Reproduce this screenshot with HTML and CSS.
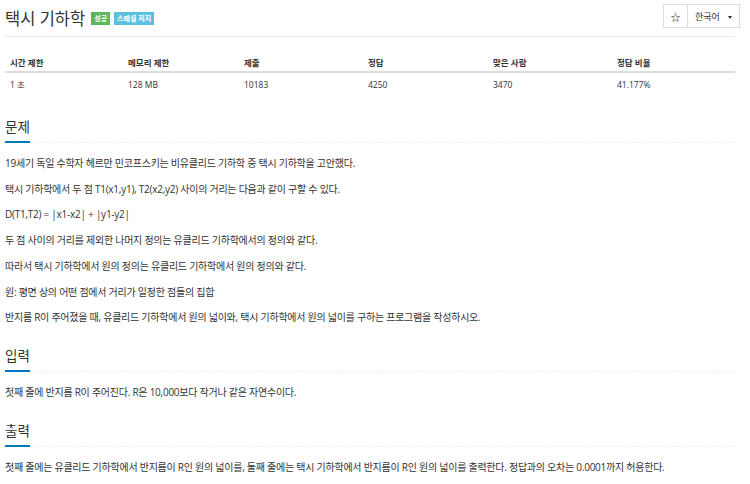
FILE: index.html
```html
<!DOCTYPE html>
<html>
<head>
  <title>택시 기하학</title>
  <link rel="stylesheet" href="styles.css">
</head>
<body>
  <div class="page">
    <div class="page-header">
      <h1 class="title">택시 기하학</h1>
      <span class="label label-success">성공</span>
      <span class="label label-info">스페셜 저지</span>
      <div class="btn-group">
        <button class="btn btn-star">☆</button>
        <button class="btn btn-lang">한국어 <span class="caret"></span></button>
      </div>
    </div>

    <table class="info-table">
      <thead>
        <tr>
          <th class="col1">시간 제한</th>
          <th class="col2">메모리 제한</th>
          <th class="col3">제출</th>
          <th class="col4">정답</th>
          <th class="col5">맞은 사람</th>
          <th class="col6">정답 비율</th>
        </tr>
      </thead>
      <tbody>
        <tr>
          <td>1 초</td>
          <td>128 MB</td>
          <td>10183</td>
          <td>4250</td>
          <td>3470</td>
          <td>41.177%</td>
        </tr>
      </tbody>
    </table>

    <section class="problem-section">
      <div class="headline"><h2><span>문제</span></h2></div>
      <p>19세기 독일 수학자 헤르만 민코프스키는 비유클리드 기하학 중 택시 기하학을 고안했다.</p>
      <p>택시 기하학에서 두 점 T1(x1,y1), T2(x2,y2) 사이의 거리는 다음과 같이 구할 수 있다.</p>
      <p>D(T1,T2) = |x1-x2| + |y1-y2|</p>
      <p>두 점 사이의 거리를 제외한 나머지 정의는 유클리드 기하학에서의 정의와 같다.</p>
      <p>따라서 택시 기하학에서 원의 정의는 유클리드 기하학에서 원의 정의와 같다.</p>
      <p>원: 평면 상의 어떤 점에서 거리가 일정한 점들의 집합</p>
      <p>반지름 R이 주어졌을 때, 유클리드 기하학에서 원의 넓이와, 택시 기하학에서 원의 넓이를 구하는 프로그램을 작성하시오.</p>
    </section>

    <section class="problem-section">
      <div class="headline"><h2><span>입력</span></h2></div>
      <p>첫째 줄에 반지름 R이 주어진다. R은 10,000보다 작거나 같은 자연수이다.</p>
    </section>

    <section class="problem-section">
      <div class="headline"><h2><span>출력</span></h2></div>
      <p>첫째 줄에는 유클리드 기하학에서 반지름이 R인 원의 넓이를, 둘째 줄에는 택시 기하학에서 반지름이 R인 원의 넓이를 출력한다. 정답과의 오차는 0.0001까지 허용한다.</p>
    </section>
  </div>
</body>
</html>
```

FILE: styles.css
```css
body {
  margin: 0;
  font-family: "Open Sans", "Noto Sans CJK KR", sans-serif;
  color: #333;
  background: #fff;
}

.page {
  padding: 0 15px 0 5px;
}

.page-header {
  display: flex;
  align-items: center;
  height: 36px;
  border-bottom: 1px solid #eee;
}

.title {
  margin: 0 6px 0 0;
  font-size: 16.5px;
  font-weight: normal;
  color: #333;
}

.label {
  display: inline-block;
  margin-right: 4px;
  padding: 0 3px;
  font-size: 7px;
  line-height: 13px;
  font-weight: bold;
  color: #fff;
}

.label-success {
  background-color: #5cb85c;
}

.label-info {
  background-color: #5bc0de;
}

.btn-group {
  display: flex;
  margin-left: auto;
  margin-right: -5px;
  align-self: flex-start;
  margin-top: 4px;
}

.btn {
  height: 24px;
  padding: 0;
  border: 1px solid #ddd;
  background: #fff;
  color: #333;
  font-family: inherit;
  font-size: 9px;
  white-space: nowrap;
}

.btn-star {
  width: 25px;
  font-size: 10px;
}

.btn-lang {
  margin-left: -1px;
  width: 53px;
}

.caret {
  display: inline-block;
  margin-left: 6px;
  vertical-align: middle;
  border-top: 3px solid #333;
  border-left: 2.5px solid transparent;
  border-right: 2.5px solid transparent;
}

.info-table {
  width: 730px;
  margin-top: 15px;
  border-collapse: collapse;
  font-size: 8.5px;
  text-align: left;
}

.info-table th {
  padding: 0 5px;
  height: 19px;
  font-weight: bold;
  border-bottom: 2px solid #ddd;
}

.info-table td {
  padding: 0 5px;
  height: 22px;
}

.col1 { width: 108px; }
.col2 { width: 106px; }
.col3 { width: 114px; }
.col4 { width: 115px; }
.col5 { width: 114px; }
.col6 { width: 113px; }

.headline {
  margin-top: 14px;
  border-bottom: 1px dashed #eee;
}

.headline h2 {
  margin: 0;
  font-size: 13.5px;
  font-weight: normal;
  line-height: 22px;
}

.headline h2 span {
  display: inline-block;
  padding-bottom: 3px;
  margin-bottom: -1px;
  border-bottom: 2px solid #0076c0;
}

.problem-section p {
  margin: 0;
  font-size: 10px;
  letter-spacing: -0.25px;
  line-height: 25.7px;
}

.problem-section .headline + p {
  margin-top: 8px;
}

.problem-section:first-of-type .headline {
  margin-top: 21px;
}
```
